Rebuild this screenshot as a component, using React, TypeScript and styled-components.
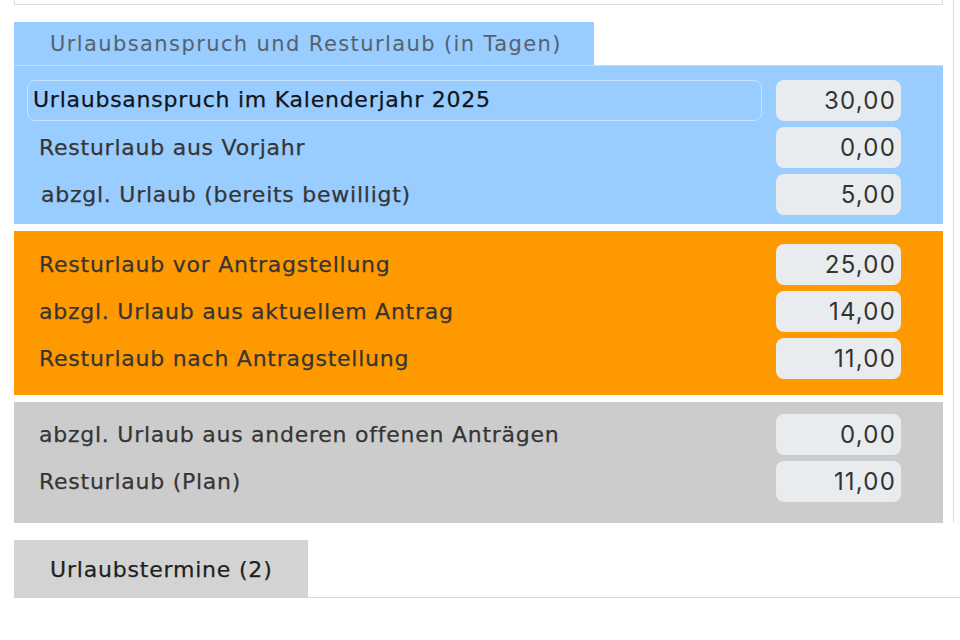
import styled, { createGlobalStyle } from "styled-components";

const GlobalStyle = createGlobalStyle`
  html, body {
    margin: 0;
    padding: 0;
    background: #ffffff;
    font-family: "DejaVu Sans", "Noto Sans", sans-serif;
  }
`;

const Panel = styled.div`
  width: 929px;
  padding: 0 10px 0 14px;
  border-right: 1px solid #dddddd;
`;

const TopBox = styled.div`
  height: 4px;
  border: 1px solid #dddddd;
  border-top: none;
  background: #ffffff;
`;

const TabHeader = styled.div`
  margin-top: 17px;
  width: 544px;
  height: 43px;
  padding-left: 36px;
  display: flex;
  align-items: center;
  background: #99ccff;
  color: #56616d;
  font-size: 21px;
  letter-spacing: 1.4px;
`;

const Section = styled.div<{ $bg: string; $pt: number; $pb: number; $top?: string }>`
  display: flex;
  flex-direction: column;
  gap: 6px;
  margin-top: ${(p) => (p.$top ? "0" : "7px")};
  padding: ${(p) => p.$pt}px 42px ${(p) => p.$pb}px 13px;
  background: ${(p) => p.$bg};
  border-top: 1px solid ${(p) => p.$top || p.$bg};
`;

const Row = styled.div`
  display: flex;
  align-items: center;
  gap: 14px;
  height: 41px;
`;

const Label = styled.div<{ $boxed?: boolean; $indent: number }>`
  flex: 1;
  height: 100%;
  box-sizing: border-box;
  display: flex;
  align-items: center;
  padding-left: ${(p) => p.$indent}px;
  padding-bottom: ${(p) => (p.$boxed ? 2 : 0)}px;
  border: 1px solid ${(p) => (p.$boxed ? "rgba(255,255,255,0.45)" : "transparent")};
  border-radius: 8px;
  font-size: 22px;
  letter-spacing: 0.75px;
  color: ${(p) => (p.$boxed ? "#10141c" : "#353535")};
  -webkit-text-stroke: 0.25px currentColor;
  white-space: nowrap;
`;

const Value = styled.div`
  width: 125px;
  height: 41px;
  box-sizing: border-box;
  padding-right: 5px;
  display: flex;
  align-items: center;
  justify-content: flex-end;
  background: #e9ecef;
  border-radius: 8px;
  font-family: Inter, "DejaVu Sans", sans-serif;
  font-size: 24px;
  letter-spacing: 1.2px;
  color: #333333;
`;

const TabBar = styled.div`
  margin-top: 17px;
  padding-left: 14px;
  display: flex;
`;

const Tab = styled.div`
  width: 258px;
  height: 58px;
  padding-left: 36px;
  display: flex;
  align-items: center;
  background: #d3d3d3;
  color: #1f1f1f;
  font-size: 22px;
  letter-spacing: 0.8px;
  -webkit-text-stroke: 0.25px currentColor;
`;

const TabFill = styled.div`
  flex: 1;
  border-bottom: 1px solid #d6d6d6;
`;

type Item = { label: string; value: string; boxed?: boolean; indent?: number };

const blue: Item[] = [
  { label: "Urlaubsanspruch im Kalenderjahr 2025", value: "30,00", boxed: true, indent: 5 },
  { label: "Resturlaub aus Vorjahr", value: "0,00" },
  { label: "abzgl. Urlaub (bereits bewilligt)", value: "5,00", indent: 13 },
];

const orange: Item[] = [
  { label: "Resturlaub vor Antragstellung", value: "25,00" },
  { label: "abzgl. Urlaub aus aktuellem Antrag", value: "14,00" },
  { label: "Resturlaub nach Antragstellung", value: "11,00" },
];

const gray: Item[] = [
  { label: "abzgl. Urlaub aus anderen offenen Anträgen", value: "0,00" },
  { label: "Resturlaub (Plan)", value: "11,00" },
];

function Rows({ items }: { items: Item[] }) {
  return (
    <>
      {items.map((it) => (
        <Row key={it.label}>
          <Label $boxed={it.boxed} $indent={it.indent ?? 11}>
            {it.label}
          </Label>
          <Value>{it.value}</Value>
        </Row>
      ))}
    </>
  );
}

export default function App() {
  return (
    <>
      <GlobalStyle />
      <Panel>
        <TopBox />
        <TabHeader>Urlaubsanspruch und Resturlaub (in Tagen)</TabHeader>
        <Section $bg="#99ccff" $pt={14} $pb={9} $top="#b9ddff">
          <Rows items={blue} />
        </Section>
        <Section $bg="#ff9900" $pt={12} $pb={16}>
          <Rows items={orange} />
        </Section>
        <Section $bg="#cccccc" $pt={11} $pb={21}>
          <Rows items={gray} />
        </Section>
      </Panel>
      <TabBar>
        <Tab>Urlaubstermine (2)</Tab>
        <TabFill />
      </TabBar>
    </>
  );
}
